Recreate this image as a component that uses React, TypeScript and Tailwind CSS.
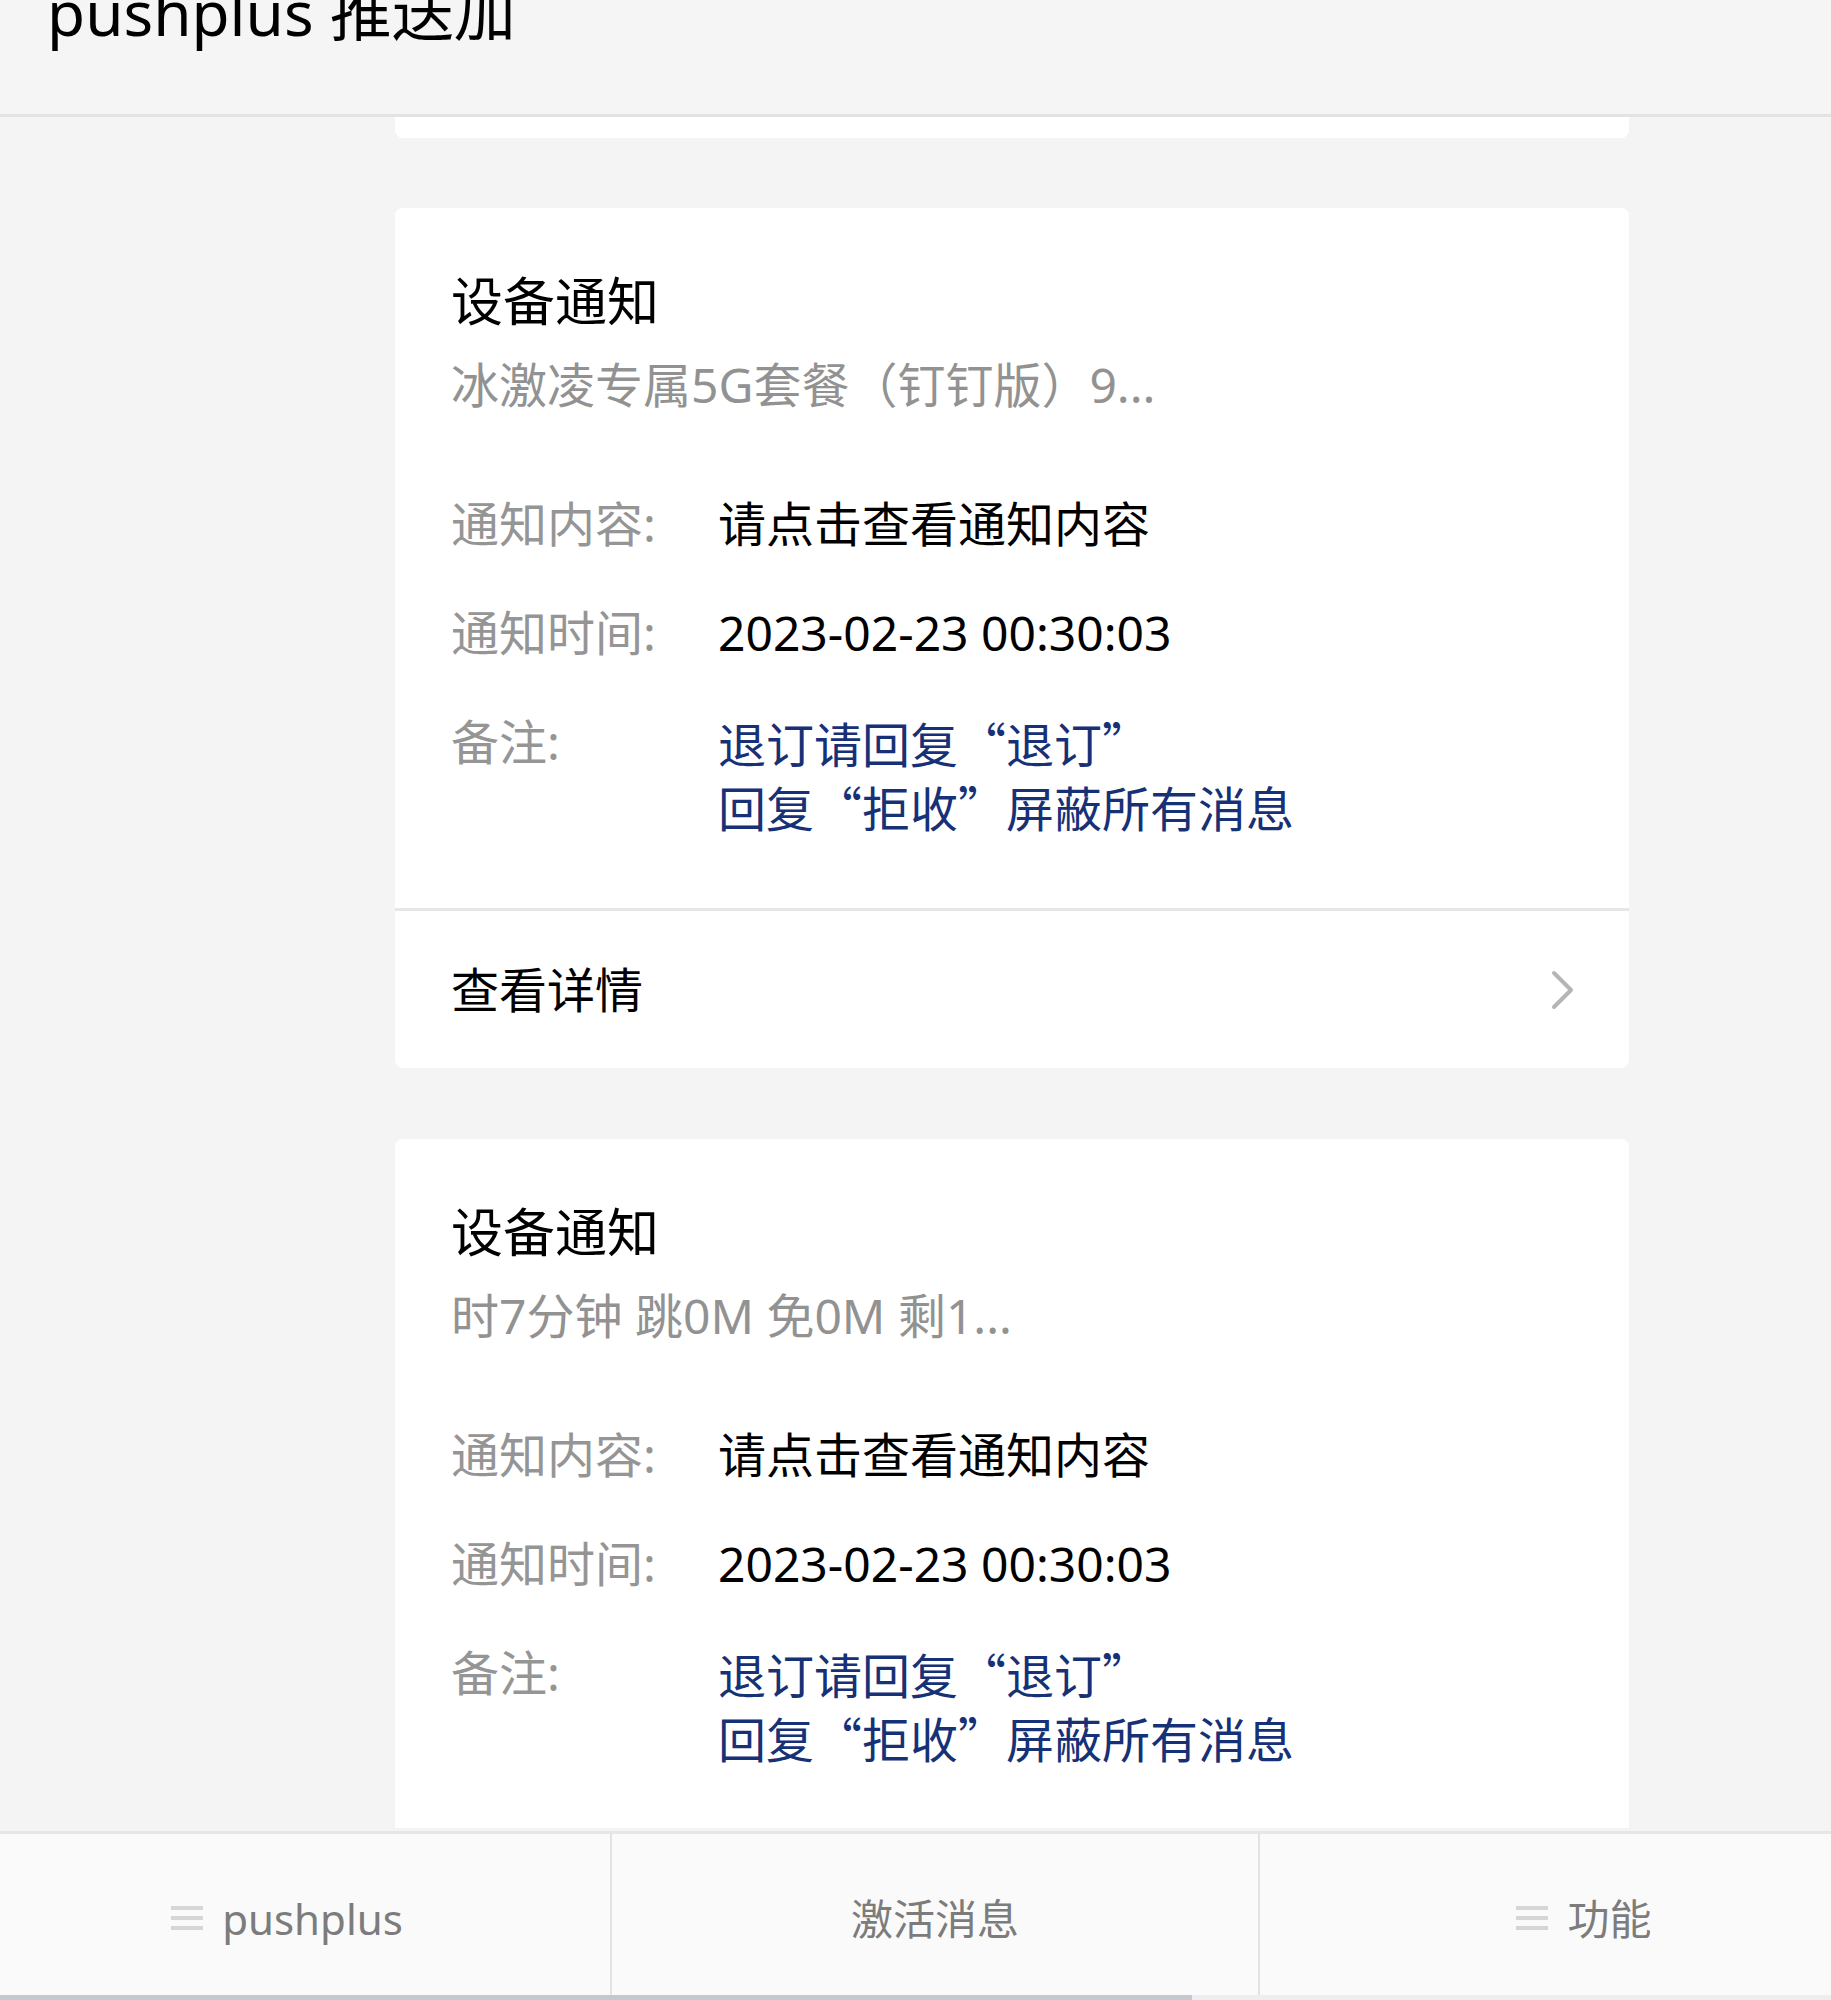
import React from "react";

const FONT = "font-[family-name:'Noto_Sans','Noto_Sans_CJK_SC',sans-serif]";
const CJK = "font-[family-name:'Noto_Sans_CJK_SC',sans-serif]";

function Chevron() {
  return (
    <svg width="26" height="40" viewBox="0 0 26 40" fill="none">
      <polyline
        points="4,3 21,20 4,37"
        stroke="#b5b5b5"
        strokeWidth="4"
        strokeLinecap="round"
        strokeLinejoin="round"
      />
    </svg>
  );
}

function MenuIcon() {
  return (
    <svg width="32" height="26" viewBox="0 0 32 26">
      <rect x="0" y="0" width="32" height="4" fill="#d6d6d6" />
      <rect x="0" y="10" width="32" height="4" fill="#d6d6d6" />
      <rect x="0" y="20" width="32" height="4" fill="#d6d6d6" />
    </svg>
  );
}

type Card = { subtitle: string };

function Row({ label, children }: { label: string; children: React.ReactNode }) {
  return (
    <div className="flex text-[48px] leading-[64px]">
      <div className="w-[267px] shrink-0 text-[#959595]">{label}</div>
      <div className="text-black">{children}</div>
    </div>
  );
}

function NoticeCard({ subtitle }: Card) {
  return (
    <div className="ml-[395px] w-[1234px] shrink-0 rounded-[8px] bg-white">
      <div className="pl-[56px] pt-[57px] pb-[70px]">
        <div className="text-[52px] leading-[72px] text-black">设备通知</div>
        <div className="mt-[16px] text-[48px] leading-[64px] text-[#929292]">{subtitle}</div>
        <div className="mt-[75px] flex flex-col gap-[45px]">
          <Row label="通知内容:">请点击查看通知内容</Row>
          <Row label="通知时间:">2023-02-23 00:30:03</Row>
          <div className="flex text-[48px] leading-[64px]">
            <div className="w-[267px] shrink-0 text-[#959595]">备注:</div>
            <div className={`${CJK} text-[#173177]`}>
              <div>退订请回复“退订”</div>
              <div>回复“拒收”屏蔽所有消息</div>
            </div>
          </div>
        </div>
      </div>
      <div className="h-[3px] bg-[#e6e6e6]" />
      <div className="flex h-[157px] items-center justify-between pl-[56px] pr-[53px]">
        <span className="text-[48px] leading-[64px] text-black">查看详情</span>
        <Chevron />
      </div>
    </div>
  );
}

export default function App() {
  return (
    <div className={`${FONT} flex h-[2000px] w-[1831px] flex-col overflow-hidden bg-[#f4f4f4]`}>
      <header className="h-[117px] shrink-0 overflow-hidden border-b-[3px] border-[#e3e3e3] bg-[#f5f5f5]">
        <div className="-mt-[18px] pl-[47px] text-[62px] leading-[60px] text-black">pushplus 推送加</div>
      </header>

      <main className="flex h-[1711px] shrink-0 flex-col overflow-hidden">
        <div className="ml-[395px] h-[21px] w-[1234px] shrink-0 rounded-b-[8px] bg-white" />
        <div className="mt-[70px] flex flex-col gap-[71px]">
          <NoticeCard subtitle="冰激凌专属5G套餐（钉钉版）9..." />
          <NoticeCard subtitle="时7分钟 跳0M 免0M 剩1..." />
        </div>
      </main>

      <div className="h-[3px] shrink-0 bg-[#f4f4f4]" />
      <nav className="flex h-[164px] shrink-0 overflow-hidden border-t-[3px] border-[#e6e6e6] bg-[#fafafa] pt-[8px]">
        <div className="-ml-[36px] -mt-[8px] flex">
          <div className="flex w-[648px] items-center justify-center gap-[19px] border-r-2 border-[#e2e2e2] pt-[8px]">
            <MenuIcon />
            <span className="text-[42px] leading-[56px] text-[#7c7c7c]">pushplus</span>
          </div>
          <div className="flex w-[648px] items-center justify-center border-r-2 border-[#e2e2e2] pt-[8px]">
            <span className="text-[42px] leading-[56px] text-[#7c7c7c]">激活消息</span>
          </div>
          <div className="flex w-[648px] items-center justify-center gap-[19px] pt-[8px]">
            <MenuIcon />
            <span className="text-[42px] leading-[56px] text-[#7c7c7c]">功能</span>
          </div>
        </div>
      </nav>
      <div className="flex h-[5px] shrink-0 bg-[#eeeeee]">
        <div className="h-full w-[1192px] bg-[#c3c9cf]" />
      </div>
    </div>
  );
}
